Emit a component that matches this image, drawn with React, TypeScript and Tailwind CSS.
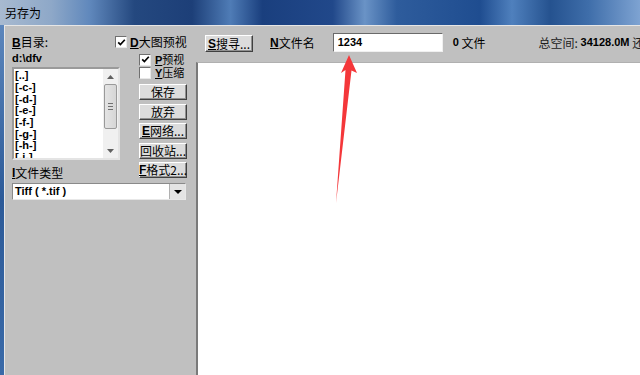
import React from "react";

const cjk = { fontFamily: '"Noto Sans CJK SC", "Liberation Sans", sans-serif' };
const latin = { fontFamily: '"Liberation Sans", "Noto Sans CJK SC", sans-serif' };

function Check({ checked }: { checked: boolean }) {
  return (
    <div className="w-[12px] h-[12px] bg-white border border-t-[#707070] border-l-[#707070] border-b-[#e8e8e8] border-r-[#e8e8e8] flex items-center justify-center shrink-0">
      {checked && (
        <svg width="9" height="9" viewBox="0 0 9 9">
          <path d="M1.2 4.4 L3.4 6.6 L7.8 1.8" fill="none" stroke="#000" strokeWidth="1.7" />
        </svg>
      )}
    </div>
  );
}

function Btn({ children, w = "w-[48px]", h = "h-[16px]" }: { children: React.ReactNode; w?: string; h?: string }) {
  return (
    <div className={`${w} ${h} bg-[#dcdcdc] border border-t-[#ffffff] border-l-[#ffffff] border-b-[#404040] border-r-[#404040] shadow-[inset_-1px_-1px_0_#909090] flex items-center justify-center text-[12px] leading-none text-black whitespace-nowrap`} style={cjk}>
      {children}
    </div>
  );
}

const U = ({ c }: { c: string }) => <span className="underline font-bold" style={latin}>{c}</span>;

export default function App() {
  const items = ["[..]", "[-c-]", "[-d-]", "[-e-]", "[-f-]", "[-g-]", "[-h-]", "[-i-]"];
  return (
    <div className="relative w-[640px] h-[375px] overflow-hidden flex flex-col bg-[#c0c0c0]">
      {/* title bar */}
      <div
        className="h-[25px] shrink-0 flex items-center pl-[5px] text-[12px] text-black bg-[linear-gradient(90deg,#a8bad0_0%,#8ea8c8_8%,#6088bc_14%,#24487f_21%,#1d3f78_30%,#4f7cb6_36%,#1a3f7e_41%,#21488a_52%,#6a93c6_57%,#2e5c9c_62%,#1f4d90_75%,#4f80bd_80%,#25528f_86%,#3f6eaa_92%,#7ea3d2_100%)]"
        style={cjk}
      >
        另存为
      </div>
      <div className="flex-1 flex min-h-0">
        {/* left blue frame */}
        <div className="w-[4px] shrink-0 bg-[linear-gradient(180deg,#5c86bc_0%,#2c5a98_50%,#3a6aa8_100%)]" />
        <div className="flex-1 flex border-t border-l border-[#e6e6e6] min-h-0">
          {/* left panel */}
          <div className="w-[191px] shrink-0 pl-[7px] pt-[8px] flex flex-col">
            <div className="flex h-[16px] items-center">
              <div className="w-[103px] text-[12px] leading-none text-black" style={cjk}>
                <U c="B" />目录:
              </div>
              <Check checked />
              <div className="ml-[3px] text-[12px] leading-none text-black" style={cjk}>
                <U c="D" />大图预视
              </div>
            </div>
            <div className="flex">
              <div className="w-[108px] flex flex-col">
                <div className="h-[17px] flex items-center text-[11px] font-bold text-black" style={latin}>
                  d:\dfv
                </div>
                <div className="h-[93px] bg-white border-2 border-t-[#9a9a9a] border-l-[#9a9a9a] border-b-[#e4e4e4] border-r-[#e4e4e4] flex overflow-hidden">
                  <div className="flex-1 pl-[1px] pt-[1px] flex flex-col">
                    {items.map((t) => (
                      <div key={t} className="h-[11.7px] shrink-0 flex items-center text-[11px] font-bold leading-none text-black" style={latin}>
                        {t}
                      </div>
                    ))}
                  </div>
                  <div className="w-[15px] bg-[#f0f0f0] flex flex-col items-center">
                    <div className="h-[15px] flex items-center justify-center">
                      <svg width="7" height="4" viewBox="0 0 7 4"><path d="M0 4 L3.5 0 L7 4 Z" fill="#606060" /></svg>
                    </div>
                    <div className="w-[13px] h-[45px] rounded-[2px] border border-[#9a9a9a] bg-[linear-gradient(90deg,#e4e4e4,#d6d6d6)] flex flex-col items-center justify-center gap-[2px]">
                      <div className="w-[5px] h-px bg-[#707070]" />
                      <div className="w-[5px] h-px bg-[#707070]" />
                      <div className="w-[5px] h-px bg-[#707070]" />
                    </div>
                    <div className="flex-1" />
                    <div className="h-[15px] flex items-center justify-center">
                      <svg width="7" height="4" viewBox="0 0 7 4"><path d="M0 0 L3.5 4 L7 0 Z" fill="#606060" /></svg>
                    </div>
                  </div>
                </div>
                <div className="mt-[5px] h-[15px] flex items-center text-[12px] leading-none text-black" style={cjk}>
                  <U c="I" />文件类型
                </div>
              </div>
              <div className="ml-[19px] pt-[3px] flex flex-col">
                <div className="h-[13px] flex items-center">
                  <Check checked />
                  <div className="ml-[4px] text-[11px] leading-[11px] text-black" style={cjk}>
                    <U c="P" />预视
                  </div>
                </div>
                <div className="h-[13px] flex items-center">
                  <Check checked={false} />
                  <div className="ml-[4px] text-[11px] leading-[11px] text-black" style={cjk}>
                    <U c="Y" />压缩
                  </div>
                </div>
                <div className="mt-[5px] flex flex-col gap-[3.5px]">
                  <Btn>保存</Btn>
                  <Btn>放弃</Btn>
                  <Btn><U c="E" />网络...</Btn>
                  <Btn>回收站...</Btn>
                  <Btn><U c="F" />格式2...</Btn>
                </div>
              </div>
            </div>
            <div className="mt-[3px] w-[174px] h-[17px] bg-white border border-t-[#8a8a8a] border-l-[#8a8a8a] border-b-[#e8e8e8] border-r-[#e8e8e8] flex">
              <div className="flex-1 flex items-center pl-[2px] text-[11px] font-bold text-black" style={latin}>
                Tiff ( *.tif )
              </div>
              <div className="w-[16px] bg-[#e4e4e4] border-l border-[#b0b0b0] flex items-center justify-center">
                <svg width="8" height="4" viewBox="0 0 8 4"><path d="M0 0 L4 4 L8 0 Z" fill="#000" /></svg>
              </div>
            </div>
          </div>
          {/* right area */}
          <div className="flex-1 flex flex-col min-w-0">
            <div className="h-[36px] shrink-0 flex items-start pl-[9px] pt-[7px] whitespace-nowrap">
              <div className="mt-[2px]">
                <Btn h="h-[17px]"><U c="S" />搜寻...</Btn>
              </div>
              <div className="ml-[17px] h-[19px] flex items-center text-[12px] leading-none text-black" style={cjk}>
                <U c="N" />文件名
              </div>
              <div className="ml-[18px] w-[110px] h-[19px] bg-white border border-t-[#6a6a6a] border-l-[#6a6a6a] border-b-[#f0f0f0] border-r-[#f0f0f0] flex items-center pl-[4px] text-[11px] font-bold text-black" style={latin}>
                1234
              </div>
              <div className="ml-[10px] h-[19px] flex items-center text-[12px] leading-none text-black" style={cjk}>
                <span className="font-bold text-[11px]" style={latin}>0</span>&nbsp;文件
              </div>
              <div className="ml-[53px] h-[19px] flex items-center text-[12px] leading-none text-[#202020]" style={cjk}>
                总空间:&nbsp;<span className="font-bold text-[11px] text-black" style={latin}>34128.0M</span>&nbsp;还
              </div>
            </div>
            <div className="flex-1 bg-white border-l-2 border-l-[#7a7a7a] border-t border-t-[#b0b0b0]" />
          </div>
        </div>
      </div>
      {/* red annotation arrow */}
      <svg className="absolute left-0 top-0 pointer-events-none" width="640" height="375" viewBox="0 0 640 375">
        <path d="M349 55 L357 73 L351.5 70.5 L336 203 L345.5 70 L341 73 Z" fill="#f4373a" />
      </svg>
    </div>
  );
}
